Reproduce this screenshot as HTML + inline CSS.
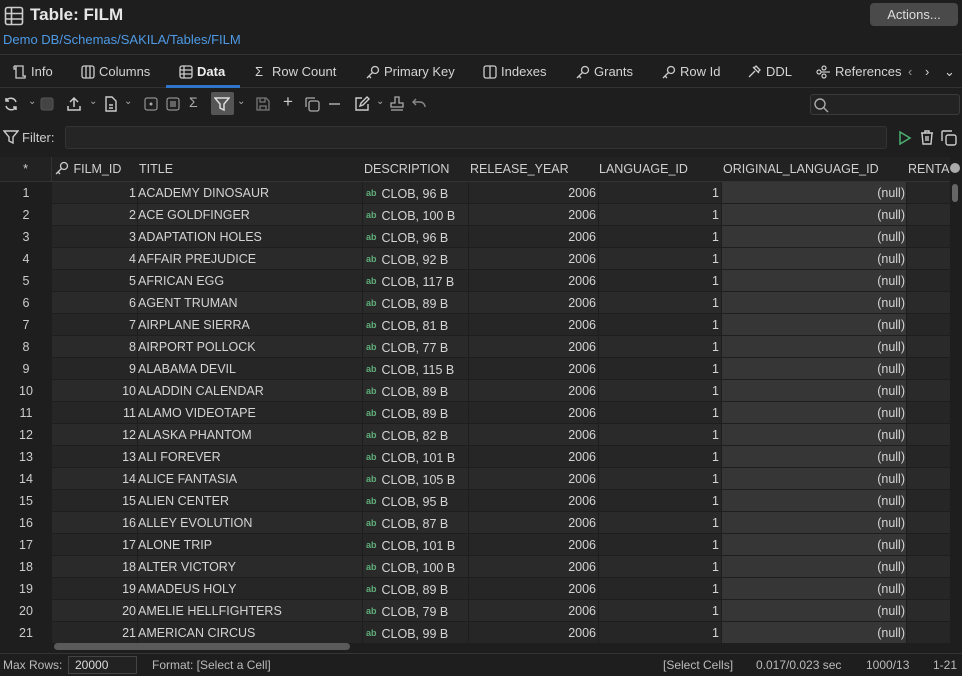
<!DOCTYPE html>
<html><head><meta charset="utf-8"><style>
*{box-sizing:border-box;margin:0;padding:0}
body{width:962px;height:675px;background:#1e1e1e;color:#d4d4d4;font-family:"Liberation Sans",sans-serif;font-size:13px;position:relative;overflow:hidden}
.abs{position:absolute}
.title{left:30px;top:5px;font-size:17px;font-weight:bold;color:#e6e6e6}
.crumb{left:3px;top:32px;color:#4e9ae6;font-size:13px}
.act{left:870px;top:3px;width:88px;height:23px;background:#4a4a4a;border-radius:4px;color:#ddd;text-align:center;line-height:23px;font-size:13px}
.tabs{left:0;top:54px;width:962px;height:34px;border-top:1px solid #333;border-bottom:1px solid #333}
.tab{position:absolute;top:9px;font-size:13px;color:#d4d4d4}
.tab svg{vertical-align:-3px;margin-right:4px}
.sel{left:166px;top:85px;width:74px;height:3px;background:#2f74c8}
.tb svg{position:absolute}
.search{left:810px;top:94px;width:150px;height:21px;border:1px solid #3a3a3a;background:#232323;border-radius:3px}
.filt{left:65px;top:126px;width:822px;height:23px;background:#252525;border:1px solid #333;border-radius:3px}
.grid{left:0;top:157px;width:950px}
.hdr{position:absolute;top:0;height:25px;line-height:25px;font-size:12.5px;color:#d0d0d0;border-right:1px solid #333;border-bottom:1px solid #333;background:#222;padding-left:2px;white-space:nowrap;overflow:hidden}
.row{position:absolute;left:0;height:22px;width:950px;font-size:12.5px;line-height:22px}
.row div{position:absolute;top:0;height:21px;white-space:nowrap;overflow:hidden}
.n{left:0;width:52px;text-align:center;background:#1e1e1e;color:#ccc}
.c1{left:52px;width:85px;text-align:right;padding-right:1px}
.c2{left:138px;width:224px}
.c3{left:363px;width:105px;padding-left:3px}
.c4{left:469px;width:129px;text-align:right;padding-right:2px}
.c5{left:599px;width:122px;text-align:right;padding-right:2px}
.c6{left:722px;width:184px;text-align:right;padding-right:1px;background:#363636 !important}
.c7{left:907px;width:43px}
.ab{color:#5fae7a;font-size:9px;font-weight:bold;margin-right:5px;vertical-align:2px}
.status{left:0;top:653px;width:962px;height:22px;border-top:1px solid #333;font-size:12px;color:#bbb;line-height:22px}
</style></head><body>
<svg class="abs" style="left:4px;top:6px" width="20" height="20" viewBox="0 0 20 20" fill="none" stroke="#ccc" stroke-width="1.6"><rect x="1.5" y="1.5" width="17" height="17" rx="2"/><path d="M1.5 7.5h17M1.5 13h17M7.5 1.5v17"/></svg>
<div class="abs title">Table: FILM</div>
<div class="abs crumb">Demo DB/Schemas/SAKILA/Tables/FILM</div>
<div class="abs act">Actions...</div>
<div class="abs tabs">
<div class="tab" style="left:12px"><svg width="15" height="14" viewBox="0 0 15 14" fill="none" stroke="#ccc" stroke-width="1.3"><path d="M2 1h9v10h3M2 1v3h2M4 1v12h9v-2"/></svg>Info</div>
<div class="tab" style="left:81px"><svg width="14" height="14" viewBox="0 0 14 14" fill="none" stroke="#ccc" stroke-width="1.3"><rect x="1" y="1" width="12" height="12" rx="2"/><path d="M5 1v12M9 1v12"/></svg>Columns</div>
<div class="tab" style="left:179px;font-weight:bold;color:#eee"><svg width="14" height="14" viewBox="0 0 14 14" fill="none" stroke="#ccc" stroke-width="1.3"><rect x="1" y="1" width="12" height="12" rx="2"/><path d="M1 5h12M1 9h12M5 1v12"/></svg>Data</div>
<div class="tab" style="left:255px">Σ</div><div class="tab" style="left:272px">Row Count</div>
<div class="tab" style="left:365px"><svg width="15" height="14" viewBox="0 0 15 14" fill="none" stroke="#ccc" stroke-width="1.3"><circle cx="10" cy="5" r="3.5"/><path d="M7.5 7.5L2 13M4 11l2 2"/></svg>Primary Key</div>
<div class="tab" style="left:483px"><svg width="14" height="14" viewBox="0 0 14 14" fill="none" stroke="#ccc" stroke-width="1.3"><rect x="1" y="1" width="12" height="12" rx="2"/><path d="M7 1v12"/></svg>Indexes</div>
<div class="tab" style="left:575px"><svg width="15" height="14" viewBox="0 0 15 14" fill="none" stroke="#ccc" stroke-width="1.3"><circle cx="10" cy="5" r="3.5"/><path d="M7.5 7.5L2 13M4 11l2 2"/></svg>Grants</div>
<div class="tab" style="left:661px"><svg width="15" height="14" viewBox="0 0 15 14" fill="none" stroke="#ccc" stroke-width="1.3"><circle cx="10" cy="5" r="3.5"/><path d="M7.5 7.5L2 13M4 11l2 2"/></svg>Row Id</div>
<div class="tab" style="left:747px"><svg width="15" height="14" viewBox="0 0 15 14" fill="none" stroke="#ccc" stroke-width="1.3"><path d="M6 2l6 6M9 1l4 4-2 2-4-4zM8 6L2 12"/></svg>DDL</div>
<div class="tab" style="left:816px"><svg width="15" height="14" viewBox="0 0 15 14" fill="none" stroke="#ccc" stroke-width="1.2"><circle cx="3" cy="7" r="2"/><circle cx="8" cy="3" r="2"/><circle cx="8" cy="11" r="2"/><path d="M5 7h9"/></svg>References</div>
<div class="tab" style="left:908px;color:#999">‹</div><div class="tab" style="left:925px">›</div><div class="tab" style="left:944px">⌄</div>
</div>
<div class="abs sel"></div>
<div class="abs tb" style="left:0;top:92px;width:460px;height:24px">
<svg style="left:3px;top:4px" width="16" height="16" viewBox="0 0 16 16" fill="none" stroke="#ccc" stroke-width="1.5"><path d="M13 6A5.5 5.5 0 0 0 3 5M3 10a5.5 5.5 0 0 0 10 1M3 2v3h3M13 14v-3h-3"/></svg>
<svg style="left:40px;top:5px" width="14" height="14"><rect x="1" y="1" width="12" height="12" rx="2" fill="#444" stroke="#555"/></svg>
<svg style="left:66px;top:4px" width="16" height="16" viewBox="0 0 16 16" fill="none" stroke="#ccc" stroke-width="1.5"><path d="M8 11V2M4 6l4-4 4 4M2 10v4h12v-4"/></svg>
<svg style="left:104px;top:4px" width="14" height="16" viewBox="0 0 14 16" fill="none" stroke="#ccc" stroke-width="1.4"><path d="M2 1h6l4 4v10H2zM5 9h4M5 12h4"/></svg>
<svg style="left:144px;top:5px" width="14" height="14" fill="none" stroke="#aaa"><rect x="1" y="1" width="12" height="12" rx="2"/><circle cx="7" cy="7" r="1" fill="#aaa"/></svg>
<svg style="left:166px;top:5px" width="14" height="14" fill="none" stroke="#aaa"><rect x="1" y="1" width="12" height="12" rx="2"/><path d="M4 5h6M4 7h6M4 9h6"/></svg>
<div class="abs" style="left:189px;top:2px;color:#aaa;font-size:14px">Σ</div>
<div class="abs" style="left:211px;top:0;width:23px;height:23px;background:#555;border-radius:2px"></div>
<svg style="left:214px;top:4px" width="16" height="16" viewBox="0 0 16 16" fill="none" stroke="#ddd" stroke-width="1.5"><path d="M1 2h14l-5 6v6l-4-2V8z"/></svg>
<svg style="left:256px;top:5px" width="14" height="14" fill="none" stroke="#777" stroke-width="1.3"><path d="M1 1h9l3 3v9H1zM4 1v4h5V1M4 13V9h6v4"/></svg>
<div class="abs" style="left:283px;top:0;color:#ccc;font-size:17px">+</div>
<svg style="left:304px;top:4px" width="16" height="16" fill="none" stroke="#aaa" stroke-width="1.3"><rect x="5" y="5" width="10" height="10" rx="2"/><path d="M11 2H3a1 1 0 0 0-1 1v8"/></svg>
<div class="abs" style="left:329px;top:11px;width:11px;height:1.5px;background:#888"></div>
<svg style="left:354px;top:4px" width="16" height="16" fill="none" stroke="#ccc" stroke-width="1.4"><path d="M8 2H2v12h12V8M6 10l1-3 6-6 2 2-6 6z"/></svg>
<svg style="left:390px;top:4px" width="14" height="16" fill="none" stroke="#aaa" stroke-width="1.3"><path d="M5 1h4v6h4v4H1V7h4zM1 14h12"/></svg>
<svg style="left:412px;top:5px" width="14" height="14" fill="none" stroke="#888" stroke-width="1.4"><path d="M4 2L1 5l3 3M1 5h7a5 5 0 0 1 5 5"/></svg>
<div class="abs" style="left:28px;top:4px;color:#aaa;font-size:10px">⌄</div>
<div class="abs" style="left:89px;top:4px;color:#aaa;font-size:10px">⌄</div>
<div class="abs" style="left:124px;top:4px;color:#aaa;font-size:10px">⌄</div>
<div class="abs" style="left:237px;top:4px;color:#aaa;font-size:10px">⌄</div>
<div class="abs" style="left:376px;top:4px;color:#aaa;font-size:10px">⌄</div>
</div>
<div class="abs search"><svg style="position:absolute;left:2px;top:2px" width="16" height="16" fill="none" stroke="#aaa" stroke-width="1.4"><circle cx="7" cy="7" r="5"/><path d="M11 11l4 4"/></svg></div>
<svg class="abs" style="left:3px;top:129px" width="16" height="16" fill="none" stroke="#ccc" stroke-width="1.4"><path d="M1 2h14l-5 6v6l-4-2V8z"/></svg>
<div class="abs" style="left:22px;top:130px;color:#ccc">Filter:</div>
<div class="abs filt"></div>
<svg class="abs" style="left:898px;top:130px" width="14" height="16" fill="none" stroke="#4caf72" stroke-width="1.5"><path d="M2 2l10 6-10 6z"/></svg>
<svg class="abs" style="left:919px;top:129px" width="16" height="17" fill="none" stroke="#ccc" stroke-width="1.4"><path d="M2 4h12M6 4V2h4v2M3 4l1 11h8l1-11M7 7v5M9 7v5"/></svg>
<svg class="abs" style="left:940px;top:129px" width="17" height="17" fill="none" stroke="#ccc" stroke-width="1.4"><rect x="6" y="6" width="10" height="10" rx="2"/><path d="M12 2H3a1 1 0 0 0-1 1v9"/></svg>
<div class="abs grid" style="height:496px">
<div class="hdr" style="left:0;width:52px;text-align:center;padding:0">*</div>
<div class="hdr" style="left:52px;width:86px"><svg width="16" height="14" style="vertical-align:-2px" fill="none" stroke="#ccc" stroke-width="1.3"><circle cx="10" cy="5" r="3.5"/><path d="M7.5 7.5L2 13M4 11l2 2"/></svg> FILM_ID</div>
<div class="hdr" style="left:137px;width:226px">TITLE</div>
<div class="hdr" style="left:362px;width:107px">DESCRIPTION</div>
<div class="hdr" style="left:468px;width:131px">RELEASE_YEAR</div>
<div class="hdr" style="left:597px;width:125px">LANGUAGE_ID</div>
<div class="hdr" style="left:721px;width:186px">ORIGINAL_LANGUAGE_ID</div>
<div class="hdr" style="left:906px;width:44px;border-right:0">RENTAL</div>
<div class="abs" style="left:950px;top:6px;width:10px;height:10px;border-radius:5px;background:#aaa"></div>
<div class="abs" style="left:952px;top:27px;width:6px;height:18px;border-radius:3px;background:#666"></div>
</div>
<div id="rows"></div>
<div class="abs" style="left:54px;top:643px;width:296px;height:7px;border-radius:4px;background:#5a5a5a"></div>
<div class="abs status">
<span class="abs" style="left:3px">Max Rows:</span>
<span class="abs" style="left:68px;top:2px;width:69px;height:18px;border:1px solid #444;background:#222;line-height:16px;padding-left:6px;color:#ddd">20000</span>
<span class="abs" style="left:152px">Format: [Select a Cell]</span>
<span class="abs" style="left:663px">[Select Cells]</span>
<span class="abs" style="left:756px">0.017/0.023 sec</span>
<span class="abs" style="left:866px">1000/13</span>
<span class="abs" style="left:933px">1-21</span>
</div>
<script>
var t=["ACADEMY DINOSAUR","ACE GOLDFINGER","ADAPTATION HOLES","AFFAIR PREJUDICE","AFRICAN EGG","AGENT TRUMAN","AIRPLANE SIERRA","AIRPORT POLLOCK","ALABAMA DEVIL","ALADDIN CALENDAR","ALAMO VIDEOTAPE","ALASKA PHANTOM","ALI FOREVER","ALICE FANTASIA","ALIEN CENTER","ALLEY EVOLUTION","ALONE TRIP","ALTER VICTORY","AMADEUS HOLY","AMELIE HELLFIGHTERS","AMERICAN CIRCUS"];
var s=[96,100,96,92,117,89,81,77,115,89,89,82,101,105,95,87,101,100,89,79,99];
var h="";
for(var i=0;i<21;i++){var bg=i%2?"#2a2a2a":"#262626";
h+='<div class="row" style="top:'+(182+i*22)+'px"><div class="n">'+(i+1)+'</div>'+
'<div class="c1" style="background:'+bg+'">'+(i+1)+'</div><div class="c2" style="background:'+bg+'">'+t[i]+'</div>'+
'<div class="c3" style="background:'+bg+'"><span class="ab">ab</span>CLOB, '+s[i]+' B</div>'+
'<div class="c4" style="background:'+bg+'">2006</div><div class="c5" style="background:'+bg+'">1</div>'+
'<div class="c6">(null)</div><div class="c7" style="background:'+bg+'"></div></div>';}
document.getElementById("rows").innerHTML=h;
</script>
</body></html>
